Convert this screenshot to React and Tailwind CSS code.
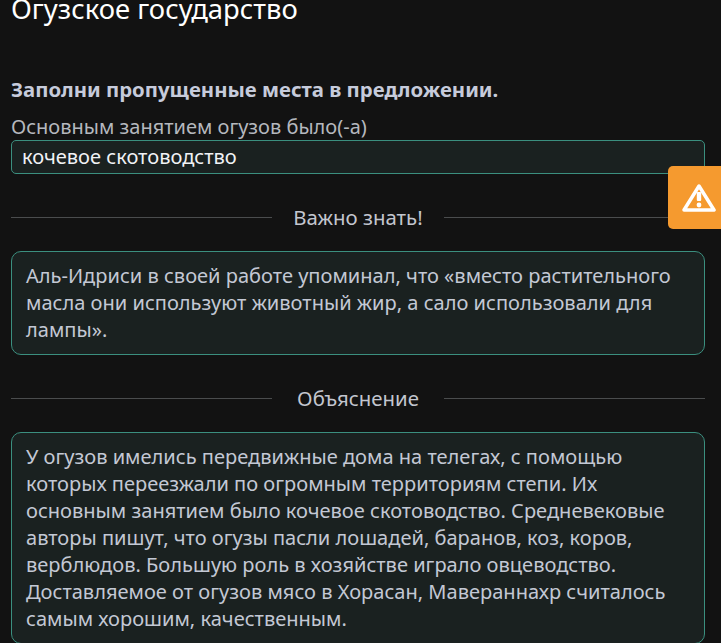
import React from "react";

function Divider({ children }) {
  return (
    <div className="flex items-center h-[27px]">
      <div className="w-[261px] h-px bg-[#4a4c4d]" />
      <div className="w-[172px] text-center text-[20.4px] leading-[27px] text-[#c3c6cf]">{children}</div>
      <div className="flex-1 h-px bg-[#4a4c4d]" />
    </div>
  );
}

function Card({ children }) {
  return (
    <div className="rounded-[10px] border border-[#3b8f7f] bg-[#1a2120] px-[14px] pt-[10px] pb-[11px] text-[20.06px] leading-[27px] text-[#c3c8d4]">
      {children}
    </div>
  );
}

export default function App() {
  return (
    <div className="relative w-[721px] h-[643px] overflow-hidden bg-[#121212] pl-[11px] pr-[16px] font-['Noto_Sans',sans-serif]">
      <h1 className="mt-[-10px] text-[27.4px] leading-[38px] font-normal text-white">Огузское государство</h1>
      <p className="mt-[48px] text-[20.33px] leading-[27px] font-bold text-[#c6cbdb]">Заполни пропущенные места в предложении.</p>
      <p className="mt-[10px] text-[20px] leading-[27px] text-[#b5b8be]">Основным занятием огузов было(-а)</p>
      <div className="h-[34px] rounded-[5px] border border-[#3b8f7f] bg-[#1a2120] pl-[10px] text-[20.06px] leading-[32px] text-[#f0f2f5]">кочевое скотоводство</div>
      <div className="mt-[30px]"><Divider>Важно знать!</Divider></div>
      <div className="mt-[20px]">
        <Card>Аль-Идриси в своей работе упоминал, что «вместо растительного масла они используют животный жир, а сало использовали для лампы».</Card>
      </div>
      <div className="mt-[30px]"><Divider>Объяснение</Divider></div>
      <div className="mt-[20px]">
        <Card>У огузов имелись передвижные дома на телегах, с помощью которых переезжали по огромным территориям степи. Их основным занятием было кочевое скотоводство. Средневековые авторы пишут, что огузы пасли лошадей, баранов, коз, коров, верблюдов. Большую роль в хозяйстве играло овцеводство. Доставляемое от огузов мясо в Хорасан, Мавераннахр считалось самым хорошим, качественным.</Card>
      </div>
      <div className="absolute left-[668px] top-[166px] w-[53px] h-[63px] rounded-l-[5px] bg-[#f59a2f] flex items-center pl-[14px]">
        <svg width="34" height="30" viewBox="0 0 34 30" fill="none">
          <path d="M17 3 L32 27 H2 Z" stroke="#fff" strokeWidth="3.5" strokeLinejoin="round" />
          <rect x="14.8" y="9" width="4.4" height="9" rx="1" fill="#fff" />
          <circle cx="17" cy="22" r="2.4" fill="#fff" />
        </svg>
      </div>
    </div>
  );
}
